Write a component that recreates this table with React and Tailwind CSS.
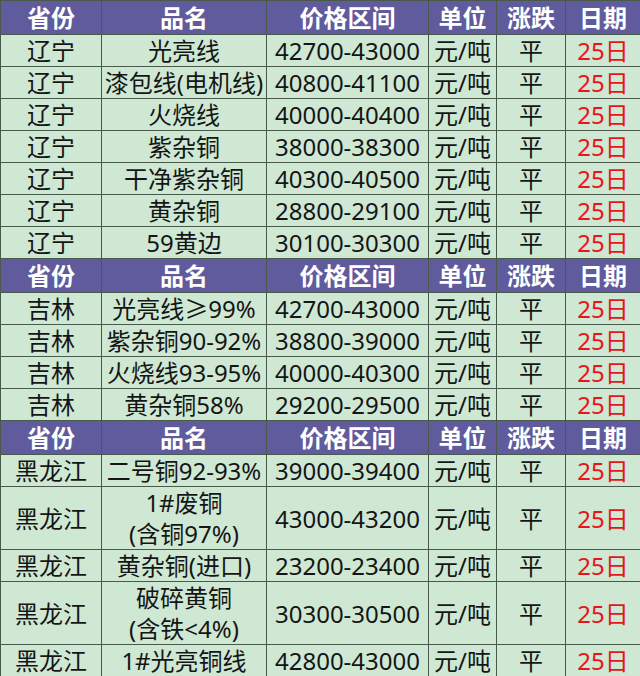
import React from "react";

const sections = [
  {
    rows: [
      ["辽宁", "光亮线", "42700-43000"],
      ["辽宁", "漆包线(电机线)", "40800-41100"],
      ["辽宁", "火烧线", "40000-40400"],
      ["辽宁", "紫杂铜", "38000-38300"],
      ["辽宁", "干净紫杂铜", "40300-40500"],
      ["辽宁", "黄杂铜", "28800-29100"],
      ["辽宁", "59黄边", "30100-30300"],
    ],
  },
  {
    rows: [
      ["吉林", "光亮线≥99%", "42700-43000"],
      ["吉林", "紫杂铜90-92%", "38800-39000"],
      ["吉林", "火烧线93-95%", "40000-40300"],
      ["吉林", "黄杂铜58%", "29200-29500"],
    ],
  },
  {
    rows: [
      ["黑龙江", "二号铜92-93%", "39000-39400"],
      ["黑龙江", ["1#废铜", "(含铜97%)"], "43000-43200"],
      ["黑龙江", "黄杂铜(进口)", "23200-23400"],
      ["黑龙江", ["破碎黄铜", "(含铁<4%)"], "30300-30500"],
      ["黑龙江", "1#光亮铜线", "42800-43000"],
    ],
  },
];

const headers = ["省份", "品名", "价格区间", "单位", "涨跌", "日期"];

const cell = "border border-[#4a5a4a] text-center align-middle p-0 leading-[31px]";

function HeaderRow() {
  return (
    <tr className="h-[34px] bg-[#5f5b9c]">
      {headers.map((h) => (
        <th key={h} className={`${cell} text-white font-bold text-[24px]`}>
          {h}
        </th>
      ))}
    </tr>
  );
}

function DataRow({ row }) {
  const [prov, name, price] = row;
  const tall = Array.isArray(name);
  return (
    <tr className={tall ? "h-[63px]" : "h-[32px]"}>
      <td className={cell}>{prov}</td>
      <td className={cell}>
        {tall ? (
          <>
            <div>{name[0]}</div>
            <div>{name[1]}</div>
          </>
        ) : (
          name
        )}
      </td>
      <td className={cell}>{price}</td>
      <td className={cell}>元/吨</td>
      <td className={cell}>平</td>
      <td className={`${cell} text-[#e8141a]`}>25日</td>
    </tr>
  );
}

export default function App() {
  return (
    <div className="w-[640px] h-[676px] overflow-hidden bg-[#cfe8d3]">
      <table
        className="w-[640px] table-fixed border-collapse text-[24px] text-[#151515]"
        style={{ fontFamily: '"Noto Sans", "Noto Sans CJK SC", sans-serif' }}
      >
        <colgroup>
          <col className="w-[101px]" />
          <col className="w-[165px]" />
          <col className="w-[162px]" />
          <col className="w-[68px]" />
          <col className="w-[69px]" />
          <col className="w-[75px]" />
        </colgroup>
        <tbody>
          {sections.map((s, i) => (
            <React.Fragment key={i}>
              <HeaderRow />
              {s.rows.map((r, j) => (
                <DataRow key={j} row={r} />
              ))}
            </React.Fragment>
          ))}
        </tbody>
      </table>
    </div>
  );
}
